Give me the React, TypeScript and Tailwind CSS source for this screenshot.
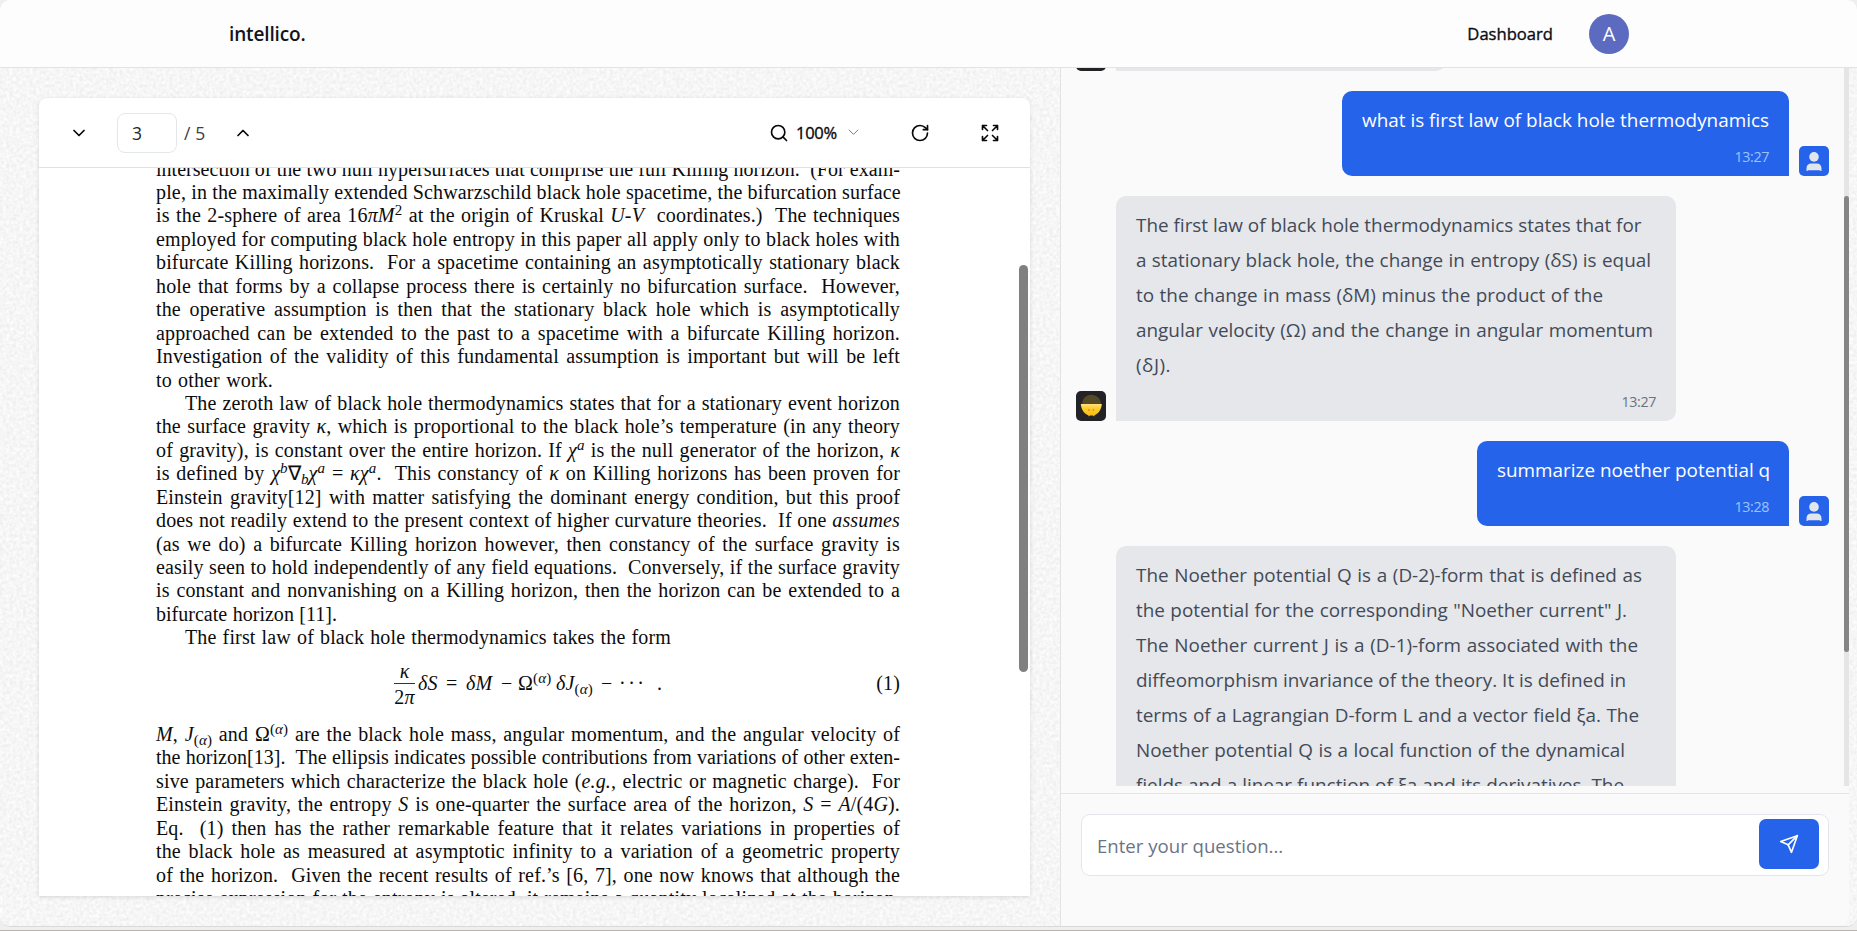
import type { ReactNode } from "react";

const SANS = "font-['Open_Sans','Noto_Sans',sans-serif]";

function Icon({ className, stroke = 2, children }: { className: string; stroke?: number; children: ReactNode }) {
  return (
    <svg viewBox="0 0 24 24" fill="none" stroke="currentColor" strokeWidth={stroke} strokeLinecap="round" strokeLinejoin="round" className={className}>
      {children}
    </svg>
  );
}

function Grain() {
  return (
    <svg className="absolute inset-0 h-full w-full" aria-hidden="true">
      <filter id="grain" x="0" y="0" width="100%" height="100%" colorInterpolationFilters="sRGB">
        <feTurbulence type="fractalNoise" baseFrequency="0.3" numOctaves="3" seed="4" />
        <feColorMatrix values="0.1 0 0 0 0.914  0.1 0 0 0 0.914  0.1 0 0 0 0.914  0 0 0 0 1" />
      </filter>
      <rect width="100%" height="100%" filter="url(#grain)" />
    </svg>
  );
}

function Header() {
  return (
    <header className="flex h-[68px] shrink-0 items-center justify-between rounded-t-[10px] border-b border-[#e2e3e5] bg-[#fdfdfd] pr-[228px] pl-[229px]">
      <span className="pt-px text-[19px] tracking-[-0.15px] font-semibold text-[#12131c]">intellico.</span>
      <div className="flex items-center gap-9">
        <span className="pt-px text-[16.6px] text-[#0b0d14] [-webkit-text-stroke:0.35px_#0b0d14]">Dashboard</span>
        <span className="flex size-10 items-center justify-center rounded-full bg-[#5c6bc0] text-[20px] text-white">A</span>
      </div>
    </header>
  );
}

function Toolbar() {
  return (
    <div className="flex h-[70px] shrink-0 items-center justify-between border-b border-[#e0e1e3] pr-[30px] pl-[30px] text-[#09090b]">
      <div className="flex items-center">
        <Icon className="size-5" stroke={2.1}><path d="m6 9 6 6 6-6" /></Icon>
        <div className="ml-7 flex h-10 w-[60px] items-center rounded-[8px] border border-[#e2e8ea] pt-px pl-[14px] text-[17.5px] tracking-[-0.5px] text-[#27272a]">3</div>
        <span className="ml-[7px] w-[49px] pt-px text-[17.5px] tracking-[0.1px] text-[#3f3f46]">/ 5</span>
        <Icon className="size-5" stroke={2.1}><path d="m18 15-6-6-6 6" /></Icon>
      </div>
      <div className="flex items-center">
        <Icon className="size-5"><circle cx="11" cy="11" r="8" /><path d="m21 21-4.3-4.3" /></Icon>
        <span className="ml-[7px] w-[50px] pt-px text-[16.5px] tracking-[-0.3px] [-webkit-text-stroke:0.35px_#09090b]">100%</span>
        <Icon className="size-[15px] text-[#71717a]" stroke={1.5}><path d="m5 8 7 7 7-7" /></Icon>
        <Icon className="ml-[49px] size-5"><path d="M21 12a9 9 0 1 1-9-9c2.52 0 4.93 1 6.74 2.74L21 8" /><path d="M21 3v5h-5" /></Icon>
        <Icon className="ml-[50px] size-5" stroke={2}>
          <path d="m21 21-6-6m6 6v-4.8m0 4.8h-4.8" />
          <path d="M3 16.2V21m0 0h4.8M3 21l6-6" />
          <path d="M21 7.8V3m0 0h-4.8M21 3l-6 6" />
          <path d="M3 7.8V3m0 0h4.8M3 3l6 6" />
        </Icon>
      </div>
    </div>
  );
}

function L({ children, className = "w-[744px]" }: { children: ReactNode; className?: string }) {
  return <div className={`h-[23.45px] whitespace-nowrap [text-align-last:justify] ${className}`}>{children}</div>;
}
function Up({ children }: { children: ReactNode }) {
  return <span className="relative -top-[7px] text-[15px] leading-none">{children}</span>;
}
function Down({ children }: { children: ReactNode }) {
  return <span className="relative top-1 text-[15px] leading-none">{children}</span>;
}

function Page() {
  return (
    <div className="-mt-[10.4px] ml-[117px] w-[744px] font-['Liberation_Serif',serif] text-[20px] leading-[23.4px] tracking-[0.15px] text-[#0c0c0c]">
      <L className="w-[744px] tracking-[0.03px]">intersection of the two null hypersurfaces that comprise the full Killing horizon.&nbsp; (For exam-</L>
      <L>ple, in the maximally extended Schwarzschild black hole spacetime, the bifurcation surface</L>
      <L>is the 2-sphere of area 16<i>πM</i><Up>2</Up> at the origin of Kruskal <i>U</i>-<i>V</i>&nbsp; coordinates.)&nbsp; The techniques</L>
      <L>employed for computing black hole entropy in this paper all apply only to black holes with</L>
      <L>bifurcate Killing horizons.&nbsp; For a spacetime containing an asymptotically stationary black</L>
      <L>hole that forms by a collapse process there is certainly no bifurcation surface.&nbsp; However,</L>
      <L>the operative assumption is then that the stationary black hole which is asymptotically</L>
      <L>approached can be extended to the past to a spacetime with a bifurcate Killing horizon.</L>
      <L>Investigation of the validity of this fundamental assumption is important but will be left</L>
      <L className="w-[117px]">to other work.</L>
      <L className="ml-[29px] w-[715px]">The zeroth law of black hole thermodynamics states that for a stationary event horizon</L>
      <L>the surface gravity <i>κ</i>, which is proportional to the black hole’s temperature (in any theory</L>
      <L>of gravity), is constant over the entire horizon. If <i>χ</i><Up><i>a</i></Up> is the null generator of the horizon, <i>κ</i></L>
      <L>is defined by <i>χ</i><Up><i>b</i></Up>∇<Down><i>b</i></Down><i>χ</i><Up><i>a</i></Up> = <i>κχ</i><Up><i>a</i></Up>.&nbsp; This constancy of <i>κ</i> on Killing horizons has been proven for</L>
      <L>Einstein gravity[12] with matter satisfying the dominant energy condition, but this proof</L>
      <L>does not readily extend to the present context of higher curvature theories.&nbsp; If one <i>assumes</i></L>
      <L>(as we do) a bifurcate Killing horizon however, then constancy of the surface gravity is</L>
      <L>easily seen to hold independently of any field equations.&nbsp; Conversely, if the surface gravity</L>
      <L>is constant and nonvanishing on a Killing horizon, then the horizon can be extended to a</L>
      <L className="w-[181px] tracking-[0.02px]">bifurcate horizon [11].</L>
      <L className="ml-[29px] w-[486px]">The first law of black hole thermodynamics takes the form</L>
      <div className="flex h-[73.2px] items-center pb-[5px] whitespace-nowrap">
        <div className="ml-[238px] flex w-[21px] flex-col items-center">
          <i className="h-[25px] leading-[26px]">κ</i>
          <span className="h-px w-full bg-[#333]" />
          <span className="h-[25px] leading-[26px]">2<i>π</i></span>
        </div>
        <i className="ml-[3px] w-[28px]">δS</i>
        <span className="w-[20px]">=</span>
        <i className="w-[35px]">δM</i>
        <span className="w-[17px]">−</span>
        <span className="w-[38px]">Ω<Up>(<i>α</i>)</Up></span>
        <span className="w-[45px]"><i>δJ</i><Down>(<i>α</i>)</Down></span>
        <span className="w-[18px]">−</span>
        <span className="w-[38px] tracking-[2.5px]">···</span>
        <span className="grow">.</span>
        <span>(1)</span>
      </div>
      <L><i>M</i>, <i>J</i><Down>(<i>α</i>)</Down> and Ω<Up>(<i>α</i>)</Up> are the black hole mass, angular momentum, and the angular velocity of</L>
      <L className="w-[744px] tracking-[0.03px]">the horizon[13].&nbsp; The ellipsis indicates possible contributions from variations of other exten-</L>
      <L>sive parameters which characterize the black hole (<i>e.g.,</i> electric or magnetic charge).&nbsp; For</L>
      <L>Einstein gravity, the entropy <i>S</i> is one-quarter the surface area of the horizon, <i>S</i> = <i>A</i>/(4<i>G</i>).</L>
      <L>Eq.&nbsp; (1) then has the rather remarkable feature that it relates variations in properties of</L>
      <L>the black hole as measured at asymptotic infinity to a variation of a geometric property</L>
      <L>of the horizon.&nbsp; Given the recent results of ref.’s [6, 7], one now knows that although the</L>
      <L>precise expression for the entropy is altered, it remains a quantity localized at the horizon.</L>
    </div>
  );
}

function BotAvatar() {
  return (
    <svg viewBox="0 0 30 30" className="size-[30px] shrink-0">
      <defs>
        <linearGradient id="face" x1="0" y1="0" x2="0" y2="1">
          <stop offset="0" stopColor="#ffe27a" />
          <stop offset="0.35" stopColor="#fdcf2f" />
          <stop offset="1" stopColor="#f7b90f" />
        </linearGradient>
      </defs>
      <rect width="30" height="30" rx="5" fill="#232227" />
      <path d="M6 13C6.500 7.500 10 3.800 15.300 3.800S24.500 7.500 25 13Z" fill="#544a26" />
      <path d="M4.800 13H25.800C25.500 18.500 22.500 22.700 18.600 24.200L18.200 25.500L17 24.600H13.800L12.800 25.500L12.200 24.200C8 22.700 5.200 18.500 4.800 13Z" fill="url(#face)" />
      <circle cx="13" cy="19" r="0.9" fill="#e8842c" />
      <circle cx="17.400" cy="19" r="0.9" fill="#e8842c" />
    </svg>
  );
}

function UserAvatar() {
  return (
    <svg viewBox="0 0 30 30" className="size-[30px] shrink-0">
      <rect width="30" height="30" rx="5" fill="#2563eb" />
      <circle cx="15" cy="10.900" r="4.800" fill="#e1e5ee" />
      <path d="M7.500 25V22.500C7.500 19.500 9.500 17.600 12.300 17.600H17.700C20.500 17.600 22.500 19.500 22.500 22.500V25C21.600 25 21.400 24.200 20.500 24.200H9.500C8.600 24.200 8.400 25 7.500 25Z" fill="#e1e5ee" />
    </svg>
  );
}

function UserMessage({ text, time, width }: { text: string; time: string; width: string }) {
  return (
    <div className="flex shrink-0 items-end justify-end gap-[10px]">
      <div className="rounded-[10px] rounded-br-none bg-[#2563eb] px-5 pt-3 pb-[9px] text-[18.9px] leading-[35px] text-white">
        <div className={`whitespace-nowrap [text-align-last:justify] ${width}`}>{text}</div>
        <div className="mt-[9px] text-right text-[14.3px] leading-5 tracking-[-0.4px] text-[#9dc3fb]">{time}</div>
      </div>
      <UserAvatar />
    </div>
  );
}

function BotMessage({ lines, time }: { lines: [string, string][]; time?: string }) {
  return (
    <div className="flex shrink-0 items-end gap-[10px]">
      <BotAvatar />
      <div className="w-[560px] rounded-[10px] rounded-bl-none bg-[#e5e7eb] px-5 pt-3 pb-[9px] text-[18.9px] leading-[35px] text-[#434a57]">
        {lines.map(([text, width]) => (
          <div key={text} className={`whitespace-nowrap [text-align-last:justify] ${width}`}>{text}</div>
        ))}
        <div className="mt-[9px] text-right text-[14.3px] leading-5 tracking-[-0.4px] text-[#6b7280]">{time}</div>
      </div>
    </div>
  );
}

function Chat() {
  return (
    <section className="relative flex w-[789px] flex-col rounded-br-[10px] border-l border-[#e2e3e5] bg-[#fafafa]">
      <div className="flex h-[718px] overflow-hidden">
        <div className="flex grow flex-col gap-5 pr-[15px] pl-[15px]">
          <div className="-mt-[82px] flex h-[85px] shrink-0 items-end gap-[10px]">
            <BotAvatar />
            <div className="h-[85px] w-[330px] rounded-[10px] rounded-bl-none bg-[#e5e7eb]" />
          </div>
          <UserMessage text="what is first law of black hole thermodynamics" time="13:27" width="w-[407px]" />
          <BotMessage
            time="13:27"
            lines={[
              ["The first law of black hole thermodynamics states that for", "w-[505px]"],
              ["a stationary black hole, the change in entropy (δS) is equal", "w-[515px]"],
              ["to the change in mass (δM) minus the product of the", "w-[467px]"],
              ["angular velocity (Ω) and the change in angular momentum", "w-[517px]"],
              ["(δJ).", "w-[36px] tracking-[0.5px]"],
            ]}
          />
          <UserMessage text="summarize noether potential q" time="13:28" width="w-[272px]" />
          <BotMessage
            lines={[
              ["The Noether potential Q is a (D-2)-form that is defined as", "w-[506px]"],
              ['the potential for the corresponding "Noether current" J.', "w-[491px]"],
              ["The Noether current J is a (D-1)-form associated with the", "w-[502px]"],
              ["diffeomorphism invariance of the theory. It is defined in", "w-[490px]"],
              ["terms of a Lagrangian D-form L and a vector field ξa. The", "w-[503px]"],
              ["Noether potential Q is a local function of the dynamical", "w-[489px]"],
              ["fields and a linear function of ξa and its derivatives. The", "w-[488px]"],
            ]}
          />
        </div>
        <div className="w-[5px] shrink-0 bg-[#e5e5e5] pt-[128px]">
          <div className="h-[456px] rounded-full bg-[#858585]" />
        </div>
      </div>
      <div className="mt-[7px] grow border-t border-[#e2e5ea] px-5 pt-5">
        <div className="flex h-[62px] items-center justify-between rounded-[9px] border border-[#e2e6ec] bg-white pr-[9px] pl-[15px]">
          <span className="pt-px text-[18.6px] text-[#6b7486]">Enter your question...</span>
          <button className="mb-[2px] flex h-[50px] w-[60px] items-center justify-center rounded-[7px] bg-[#2563eb] text-white">
            <Icon className="size-5"><path d="m22 2-7 20-4-9-9-4Z" /><path d="M22 2 11 13" /></Icon>
          </button>
        </div>
      </div>
    </section>
  );
}

export default function App() {
  return (
    <div className={`flex h-[931px] w-[1857px] flex-col overflow-hidden border-b border-[#b9b2ad] bg-[#efefef] ${SANS}`}>
      <div className="flex h-[927px] shrink-0 flex-col overflow-hidden rounded-[10px] border-b border-[#d9d9d9] bg-[#f7f7f7]">
        <Header />
        <main className="relative flex min-h-0 grow">
          <Grain />
          <div className="relative w-[1060px] pt-[30px] pl-[39px]">
            <div className="flex h-[798px] w-[991px] flex-col overflow-hidden rounded-t-[8px] bg-white shadow-[0_1px_4px_rgba(0,0,0,0.13)]">
              <Toolbar />
              <div className="relative min-h-0 grow overflow-hidden">
                <Page />
                <div className="absolute top-[97px] right-[2px] h-[407px] w-[9px] rounded-full bg-[#808080]" />
              </div>
            </div>
          </div>
          <Chat />
        </main>
      </div>
    </div>
  );
}
